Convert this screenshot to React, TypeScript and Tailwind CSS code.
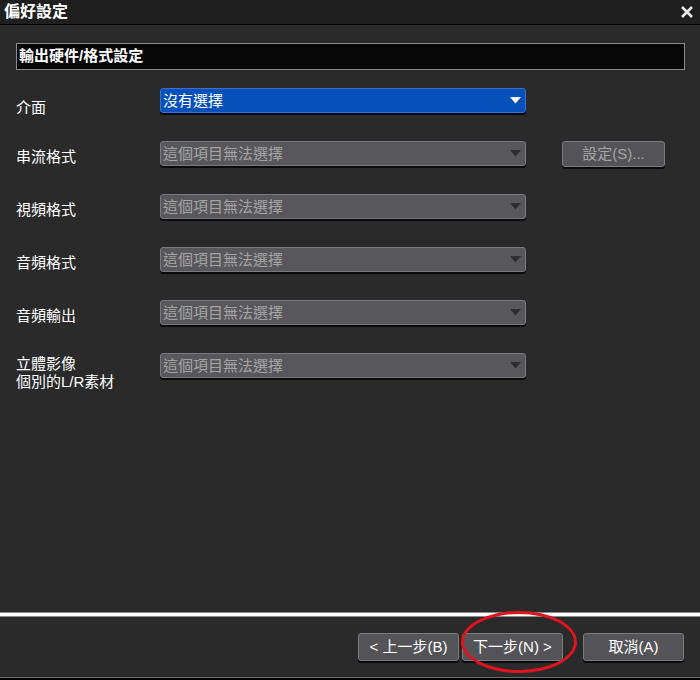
const FONT = "font-['Liberation_Sans','Noto_Sans_CJK_TC',sans-serif]";

const Caret = ({ color }: { color: string }) => (
  <svg width="11" height="7" viewBox="0 0 11 7" className="shrink-0">
    <path d="M0 0 H11 L5.5 6.5 Z" fill={color} />
  </svg>
);

const Select = ({ value, active }: { value: string; active?: boolean }) =>
  active ? (
    <div className="flex h-[25px] w-[366px] items-center justify-between rounded-[3px] border border-[#3a6fd0] bg-[#0650ba] pl-[2px] pr-[4px] shadow-[0_2px_0_#050505]">
      <span className="text-[15px] leading-none text-white">{value}</span>
      <Caret color="#ffffff" />
    </div>
  ) : (
    <div className="flex h-[25px] w-[366px] items-center justify-between rounded-[3px] border border-[#7a7a7e] bg-[#58585c] pl-[2px] pr-[4px] shadow-[0_2px_0_#0a0a0a]">
      <span className="text-[15px] leading-none text-[#a4a4a4]">{value}</span>
      <Caret color="#2e2e30" />
    </div>
  );

const Row = ({ label, children }: { label: React.ReactNode; children: React.ReactNode }) => (
  <div className="flex h-[53px] items-start">
    <div className="w-[144px] pt-[7px] text-[15px] leading-[18px] text-white">{label}</div>
    {children}
  </div>
);

const Button = ({ children }: { children: React.ReactNode }) => (
  <div className="flex h-[28px] w-[101px] items-center justify-center rounded-[3px] border border-[#7c7c80] bg-[#545458] text-[15px] text-white shadow-[0_2px_0_#0a0a0a]">
    {children}
  </div>
);

export default function App() {
  const na = "這個項目無法選擇";
  return (
    <div className={`flex h-[680px] w-[700px] flex-col bg-[#2a2a2a] ${FONT}`}>
      <div className="flex h-[25px] items-center justify-between border-b border-black bg-[#1f1f1f] pl-[4px] pr-[6px]">
        <span className="text-[16px] font-bold text-white">偏好設定</span>
        <svg width="14" height="14" viewBox="0 0 14 14">
          <path d="M2 2 L12 12 M12 2 L2 12" stroke="#e8e8e8" strokeWidth="2.6" />
        </svg>
      </div>

      <div className="flex flex-1 flex-col px-[16px] pt-[18px]">
        <div className="flex h-[27px] w-[669px] items-center border border-[#8a8a8a] bg-[#080808] pl-[2px]">
          <span className="text-[15px] font-bold text-white">輸出硬件/格式設定</span>
        </div>

        <div className="mt-[18px] flex flex-col">
          <Row label={<div className="pt-[4px]">介面</div>}>
            <Select value="沒有選擇" active />
          </Row>
          <Row label="串流格式">
            <Select value={na} />
            <div className="ml-[36px]">
              <div className="flex h-[26px] w-[103px] items-center justify-center rounded-[3px] border border-[#7c7c80] bg-[#545458] text-[15px] text-[#a4a4a4] shadow-[0_2px_0_#0a0a0a]">
                設定(S)...
              </div>
            </div>
          </Row>
          <Row label="視頻格式">
            <Select value={na} />
          </Row>
          <Row label="音頻格式">
            <Select value={na} />
          </Row>
          <Row label="音頻輸出">
            <Select value={na} />
          </Row>
          <div className="flex items-start">
            <div className="w-[144px] pt-[2px] text-[15px] leading-[18px] text-white">
              立體影像
              <br />
              個別的L/R素材
            </div>
            <Select value={na} />
          </div>
        </div>
      </div>

      <div className="h-[5px] border-y border-[#8c8c8c] bg-white" />
      <div className="relative flex h-[60px] items-center justify-end gap-[3px] pr-[16px]">
        <Button>&lt; 上一步(B)</Button>
        <Button>下一步(N) &gt;</Button>
        <div className="ml-[17px]">
          <Button>取消(A)</Button>
        </div>
        <div className="pointer-events-none absolute left-[461px] top-[-6px] h-[62px] w-[116px] rounded-[50%] border-[3px] border-[#e0141e]" />
      </div>
      <div className="h-[3px] border-t border-[#6a6a6a] bg-black" />
    </div>
  );
}
